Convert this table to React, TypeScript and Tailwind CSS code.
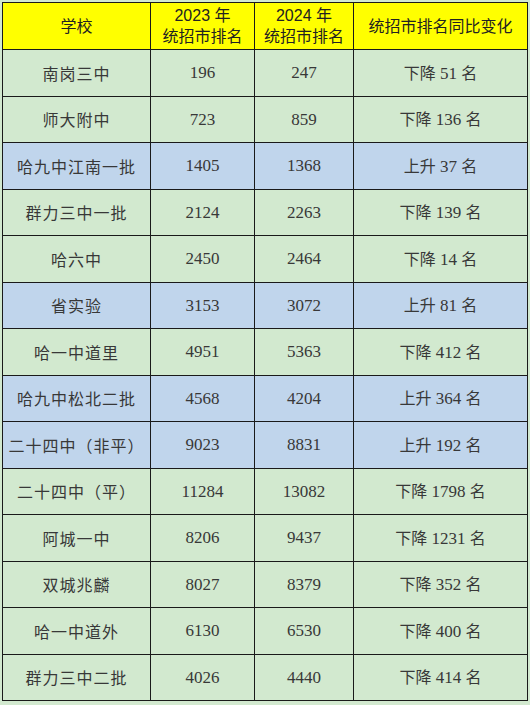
import React from "react";

type Row = { name: string; a: string; b: string; dir: string; n: string; blue?: boolean };

const rows: Row[] = [
  { name: "南岗三中", a: "196", b: "247", dir: "下降", n: "51" },
  { name: "师大附中", a: "723", b: "859", dir: "下降", n: "136" },
  { name: "哈九中江南一批", a: "1405", b: "1368", dir: "上升", n: "37", blue: true },
  { name: "群力三中一批", a: "2124", b: "2263", dir: "下降", n: "139" },
  { name: "哈六中", a: "2450", b: "2464", dir: "下降", n: "14" },
  { name: "省实验", a: "3153", b: "3072", dir: "上升", n: "81", blue: true },
  { name: "哈一中道里", a: "4951", b: "5363", dir: "下降", n: "412" },
  { name: "哈九中松北二批", a: "4568", b: "4204", dir: "上升", n: "364", blue: true },
  { name: "二十四中（非平）", a: "9023", b: "8831", dir: "上升", n: "192", blue: true },
  { name: "二十四中（平）", a: "11284", b: "13082", dir: "下降", n: "1798" },
  { name: "阿城一中", a: "8206", b: "9437", dir: "下降", n: "1231" },
  { name: "双城兆麟", a: "8027", b: "8379", dir: "下降", n: "352" },
  { name: "哈一中道外", a: "6130", b: "6530", dir: "下降", n: "400" },
  { name: "群力三中二批", a: "4026", b: "4440", dir: "下降", n: "414" },
];

const cjk = { fontFamily: '"Noto Sans CJK SC", sans-serif' };
const mixed = { fontFamily: '"Liberation Serif", "Noto Sans CJK SC", serif' };
const head = { fontFamily: '"Liberation Sans", "Noto Sans CJK SC", sans-serif' };

export default function App() {
  return (
    <div className="w-[530px] h-[705px] bg-[#d2e9cf] pl-[2px] pt-[2px]">
      <table className="border-collapse w-[525px] table-fixed">
        <colgroup>
          <col className="w-[148px]" />
          <col className="w-[104px]" />
          <col className="w-[99px]" />
          <col className="w-[174px]" />
        </colgroup>
        <thead>
          <tr className="h-[47px] bg-[#ffff00] text-[#222] text-[16px] leading-[21px]" style={head}>
            <th className="border border-[#1a1a1a] font-normal p-0">学校</th>
            <th className="border border-[#1a1a1a] font-normal p-0">
              2023 年<br />统招市排名
            </th>
            <th className="border border-[#1a1a1a] font-normal p-0">
              2024 年<br />统招市排名
            </th>
            <th className="border border-[#1a1a1a] font-normal p-0">统招市排名同比变化</th>
          </tr>
        </thead>
        <tbody>
          {rows.map((r, i) => (
            <tr
              key={i}
              className={`h-[46.5px] text-[#383838] ${r.blue ? "bg-[#c0d5ec]" : "bg-[#d2e9cf]"}`}
            >
              <td className="border border-[#1a1a1a] text-center text-[16px] tracking-[1px] p-0" style={cjk}>
                {r.name}
              </td>
              <td className="border border-[#1a1a1a] text-center text-[17px] p-0" style={mixed}>
                {r.a}
              </td>
              <td className="border border-[#1a1a1a] text-center text-[17px] p-0" style={mixed}>
                {r.b}
              </td>
              <td className="border border-[#1a1a1a] text-center text-[17px] p-0" style={mixed}>
                <span className="text-[16px]" style={cjk}>{r.dir}</span> {r.n}{" "}
                <span className="text-[16px]" style={cjk}>名</span>
              </td>
            </tr>
          ))}
        </tbody>
      </table>
    </div>
  );
}
